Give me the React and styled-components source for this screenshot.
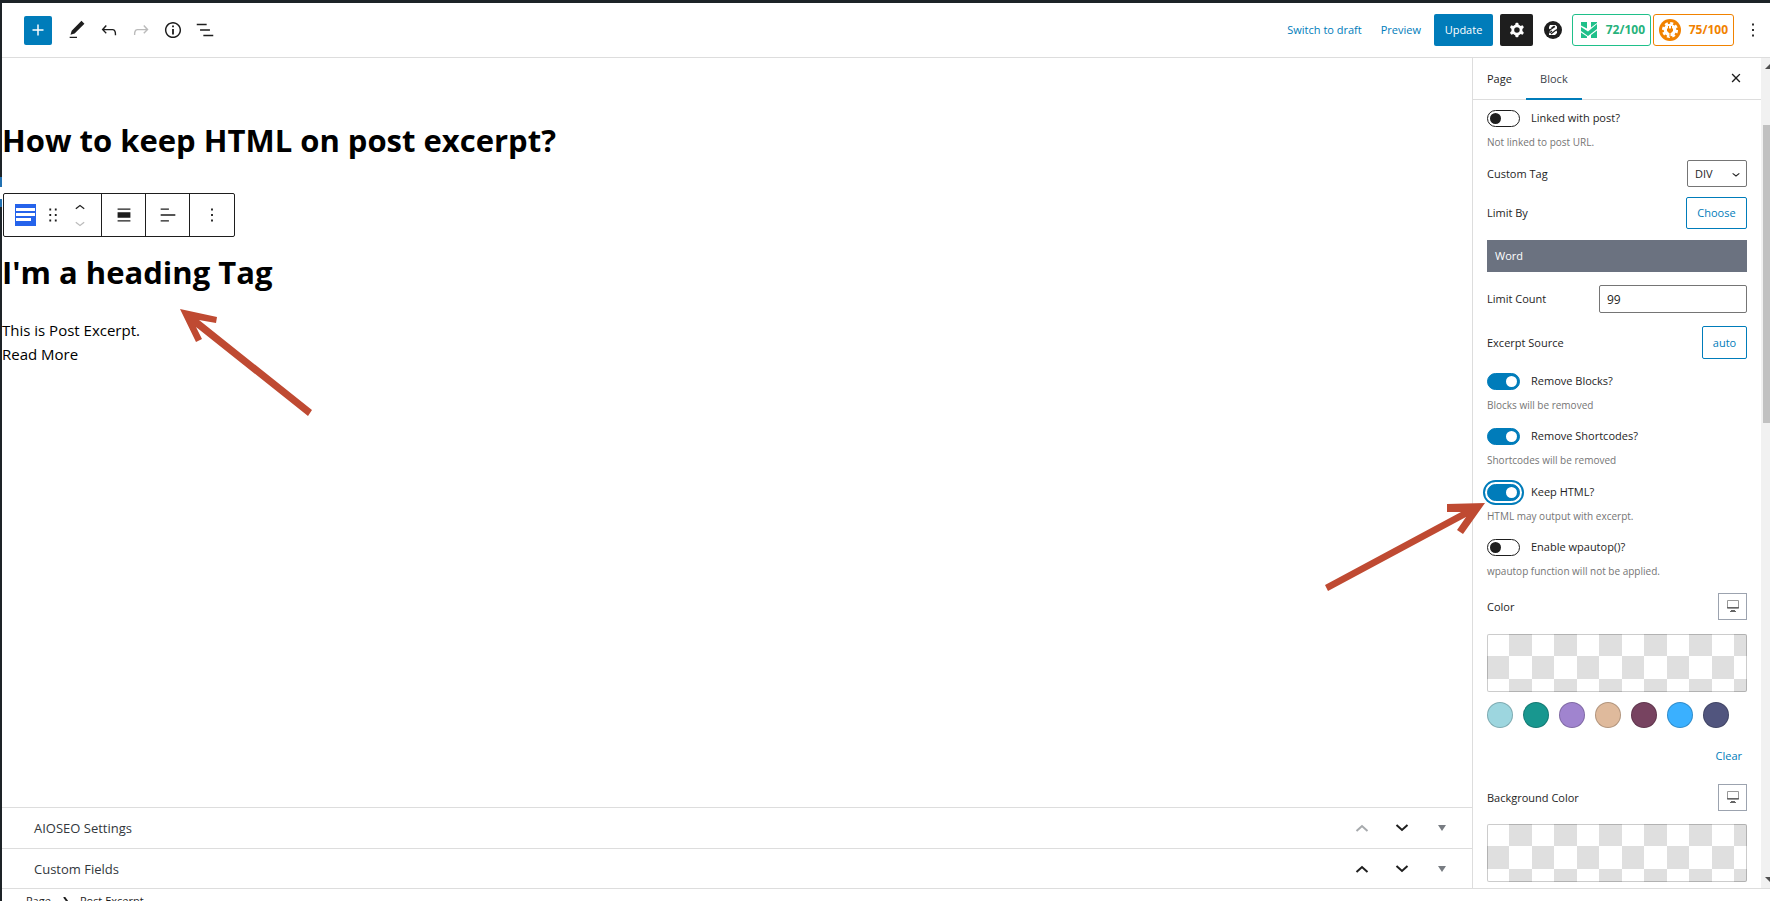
import React from "react";
import styled, { createGlobalStyle, css } from "styled-components";

const BLUE = "#007cba";
const INK = "#1e1e1e";
const LINE = "#dddddd";

const GlobalStyle = createGlobalStyle`
  *, *::before, *::after { box-sizing: border-box; }
  body {
    margin: 0;
    background: #fff;
    color: ${INK};
    font-family: "Open Sans", "Noto Sans", sans-serif;
    font-size: 11px;
    line-height: 16px;
  }
  button, input, select { font: inherit; color: inherit; margin: 0; }
  button { cursor: pointer; }
`;

/* ---------- Shell ---------- */
const Shell = styled.div`
  position: relative;
  display: flex;
  height: 100vh;
  overflow: hidden;
  border-top: 3px solid #1d2327;
`;
const MenuEdge = styled.div`
  flex: 0 0 2px;
  background: #1d2327;
  padding-top: 174px;
`;
const MenuCurrent = styled.div`
  height: 30px;
  background: linear-gradient(#2271b1 10px, #fff 10px 22px, #2271b1 22px);
`;
const Editor = styled.div`
  flex: 1;
  min-width: 0;
  display: flex;
  flex-direction: column;
`;
const Body = styled.div`
  flex: 1;
  min-height: 0;
  display: flex;
`;

/* ---------- Header ---------- */
const Header = styled.header`
  flex: 0 0 55px;
  display: flex;
  align-items: center;
  justify-content: space-between;
  padding: 0 0 0 22px;
  border-bottom: 1px solid ${LINE};
`;
const Tools = styled.div`
  display: flex;
  align-items: center;
`;
const IconButton = styled.button`
  display: flex;
  align-items: center;
  justify-content: center;
  width: ${(p) => p.$w || 32}px;
  height: ${(p) => p.$h || 32}px;
  padding: 0;
  border: 0;
  border-radius: 2px;
  background: ${(p) => p.$bg || "none"};
  color: ${(p) => p.$color || INK};
`;
const AddButton = styled(IconButton)`
  width: 28px;
  height: 29px;
  margin-right: 9px;
  background: ${BLUE};
  color: #fff;
`;
const Actions = styled.div`
  display: flex;
  align-items: center;
`;
const TextButton = styled.button`
  padding: 0;
  margin-right: ${(p) => p.$after || 0}px;
  border: 0;
  background: none;
  color: ${BLUE};
`;
const UpdateButton = styled.button`
  height: 32px;
  width: 59px;
  margin-right: 7px;
  padding: 0;
  border: 0;
  border-radius: 2px;
  background: ${BLUE};
  color: #fff;
`;
const ScoreButton = styled.button`
  display: flex;
  align-items: center;
  justify-content: space-between;
  width: ${(p) => p.$w}px;
  height: 32px;
  padding: 0 5px 0 ${(p) => p.$pad}px;
  margin-right: 2px;
  border: 1px solid ${(p) => p.$color};
  border-radius: 3px;
  background: #fff;
  color: ${(p) => p.$text};
  font-size: 12px;
  font-weight: 700;
`;

/* ---------- Canvas ---------- */
const Main = styled.main`
  flex: 1;
  min-width: 0;
  display: flex;
  flex-direction: column;
`;
const Canvas = styled.div`
  flex: 1;
  min-height: 0;
  color: #000;
  padding: 60px 0 0;
`;
const Title = styled.h1`
  margin: 0 0 30px;
  font-size: 31px;
  line-height: 45px;
  font-weight: 700;
`;
const ExcerptHeading = styled.h2`
  margin: 13px 0 23px;
  font-size: 31px;
  line-height: 45px;
  font-weight: 700;
`;
const Excerpt = styled.p`
  margin: 0;
  font-size: 15px;
  line-height: 24px;
`;
const BlockToolbar = styled.div`
  display: flex;
  width: fit-content;
  height: 44px;
  margin-left: 1px;
  border: 1px solid ${INK};
  border-radius: 2px;
`;
const ToolGroup = styled.div`
  display: flex;
  align-items: center;
  justify-content: center;
  min-width: 44px;
  padding: 0 ${(p) => p.$pad || 0}px;
  border-right: 1px solid ${INK};
  &:last-child { border-right: 0; }
`;
const Movers = styled.div`
  display: flex;
  flex-direction: column;
`;

/* ---------- Meta boxes ---------- */
const MetaBox = styled.section`
  display: flex;
  align-items: center;
  justify-content: space-between;
  height: ${(p) => p.$h}px;
  padding: 0 10px 0 32px;
  border-top: 1px solid ${LINE};
`;
const MetaTitle = styled.h2`
  margin: 0;
  font-size: 13px;
  line-height: 18px;
  font-weight: 400;
  color: #32373c;
`;
const MetaActions = styled.div`
  display: flex;
`;
const Footer = styled.footer`
  flex: 0 0 13px;
  overflow: hidden;
  border-top: 1px solid ${LINE};
`;
const Crumbs = styled.nav`
  display: flex;
  align-items: center;
  height: 24px;
  gap: 12px;
  padding-left: 24px;
`;

/* ---------- Sidebar ---------- */
const Sidebar = styled.aside`
  flex: 0 0 289px;
  display: flex;
  flex-direction: column;
  border-left: 1px solid ${LINE};
`;
const Tabs = styled.div`
  display: flex;
  flex: 0 0 42px;
  border-bottom: 1px solid ${LINE};
`;
const Tab = styled.button`
  padding: 0 14px;
  border: 0;
  background: none;
  ${(p) => p.$active && css`
    width: 56px;
    color: #3c434a;
    box-shadow: inset 0 -2px 0 ${BLUE};
    margin-bottom: -1px;
  `}
`;
const CloseButton = styled(IconButton)`
  margin: 4px 9px 0 auto;
`;
const Panel = styled.div`
  display: flex;
  flex-direction: column;
  padding: 8px 14px 0;
`;
const Row = styled.div`
  display: flex;
  align-items: center;
  justify-content: space-between;
  min-height: ${(p) => p.$h || 33}px;
  margin-bottom: ${(p) => p.$after || 0}px;
`;
const ToggleLabel = styled.label`
  display: flex;
  align-items: center;
  gap: 11px;
  height: 20px;
`;
const Switch = styled.input`
  appearance: none;
  display: flex;
  align-items: center;
  width: 33px;
  height: 17px;
  padding: 0 2px;
  border: 1px solid ${INK};
  border-radius: 9px;
  background: #fff;
  &::before {
    content: "";
    width: 11px;
    height: 11px;
    border-radius: 50%;
    background: ${INK};
  }
  &:checked {
    justify-content: flex-end;
    border-color: ${BLUE};
    background: ${BLUE};
  }
  &:checked::before { background: #fff; }
  ${(p) => p.$focused && css`
    box-shadow: 0 0 0 2px #fff, 0 0 0 4px ${BLUE};
  `}
`;
const Help = styled.p`
  margin: 6px 0 ${(p) => p.$after}px;
  font-size: 10px;
  line-height: 16px;
  color: #757575;
`;
const SelectWrap = styled.div`
  display: grid;
  align-items: center;
  justify-items: end;
  width: 60px;
  & > * { grid-area: 1 / 1; }
  & > svg { margin-right: 3px; pointer-events: none; }
`;
const Select = styled.select`
  appearance: none;
  width: 100%;
  height: 27px;
  padding: 0 7px;
  border: 1px solid #757575;
  border-radius: 2px;
  background: #fff;
`;
const OutlineButton = styled.button`
  width: ${(p) => p.$w}px;
  height: ${(p) => p.$h || 32}px;
  padding: 0;
  border: 1px solid ${BLUE};
  border-radius: 2px;
  background: #fff;
  color: ${BLUE};
`;
const Choice = styled.div`
  height: 32px;
  margin-bottom: 13px;
  padding: 0 8px;
  background: #6b7280;
  color: #fff;
  line-height: 32px;
`;
const TextField = styled.input`
  width: 148px;
  height: 28px;
  padding: 0 7px;
  border: 1px solid #757575;
  border-radius: 2px;
  font-size: 12px;
`;
const DeviceButton = styled(IconButton)`
  width: 29px;
  height: 27px;
  padding-bottom: 2px;
  border: 1px solid #9ca3af;
  border-radius: 0;
`;
const checks = "linear-gradient(45deg, #dfdfdf 25%, transparent 0, transparent 75%, #dfdfdf 0)";
const Checker = styled.button`
  height: 58px;
  padding: 0;
  border: 1px solid rgba(0, 0, 0, 0.2);
  border-radius: 2px;
  background: ${checks} 0 0 / 45px 45px border-box, ${checks} 22px 22px / 45px 45px border-box;
`;
const Swatches = styled.div`
  display: flex;
  gap: 10px;
  margin: 10px 0 20px;
`;
const Swatch = styled.button`
  width: 26px;
  height: 26px;
  padding: 0;
  border: 1px solid rgba(0, 0, 0, 0.2);
  border-radius: 50%;
  background: ${(p) => p.$color};
`;
const ClearButton = styled(TextButton)`
  align-self: flex-end;
  margin: 0 5px 20px 0;
`;

const ScrollTrack = styled.div`
  flex: 0 0 9px;
  overflow: hidden;
  display: flex;
  flex-direction: column;
  justify-content: space-between;
  background: #f1f1f1;
`;
const ScrollRange = styled.div`
  flex: 1;
  padding: 50px 0 0 2px;
`;
const ScrollThumb = styled.div`
  height: 40%;
  background: #c1c1c1;
`;

const Annotations = styled.svg`
  position: absolute;
  left: ${(p) => p.$left};
  right: ${(p) => p.$right};
  top: ${(p) => p.$top}px;
  pointer-events: none;
`;

/* ---------- Icons ---------- */
const paths = {
  plus: "M18 11.2h-5.2V6h-1.6v5.2H6v1.6h5.2V18h1.6v-5.2H18z",
  edit: "M20.1 5.1L16.9 2 6.2 12.7l-1.3 4.4 4.5-1.3L20.1 5.1zM4 20.8h8v-1.5H4v1.5z",
  undo: "M18.3 11.7c-.6-.6-1.4-.9-2.3-.9H6.7l2.9-3.3-1.1-1-4.5 5L8.5 16l1-1-2.7-2.7H16c.5 0 .9.2 1.3.5 1 1 1 3.4 1 4.5v.3h1.5v-.2c0-1.5 0-4.3-1.5-5.7z",
  redo: "M15.6 6.5l-1.1 1 2.9 3.3H8c-.9 0-1.7.3-2.3.9-1.4 1.5-1.4 4.2-1.4 5.6v.2h1.5v-.3c0-1.1 0-3.5 1-4.5.3-.3.7-.5 1.3-.5h9.2L14.5 15l1.1 1.1 4.6-4.6-4.6-5z",
  info: "M12 3.2c-4.8 0-8.8 3.9-8.8 8.8 0 4.8 3.9 8.8 8.8 8.8 4.8 0 8.8-3.9 8.8-8.8 0-4.8-4-8.8-8.8-8.8zm0 16c-4 0-7.2-3.3-7.2-7.2C4.8 8 8 4.8 12 4.8s7.2 3.3 7.2 7.2c0 4-3.2 7.2-7.2 7.2zM11 17h2v-6h-2v6zm0-8h2V7h-2v2z",
  list: "M13.8 5.2H3v1.5h10.8V5.2zm-3.6 12v1.5H21v-1.5H10.2zm7.2-6H6.6v1.5h10.8v-1.5z",
  more: "M13 19h-2v-2h2v2zm0-6h-2v-2h2v2zm0-6h-2V5h2v2z",
  cog: "M10.289 4.836A1 1 0 0111.275 4h1.306a1 1 0 01.987.836l.244 1.466c.787.26 1.503.679 2.108 1.218l1.393-.522a1 1 0 011.216.437l.653 1.13a1 1 0 01-.23 1.273l-1.148.944a6.025 6.025 0 010 2.435l1.149.946a1 1 0 01.23 1.272l-.653 1.13a1 1 0 01-1.216.437l-1.394-.522c-.605.54-1.32.958-2.108 1.218l-.244 1.466a1 1 0 01-.987.836h-1.306a1 1 0 01-.986-.836l-.244-1.466a5.995 5.995 0 01-2.108-1.218l-1.394.522a1 1 0 01-1.217-.436l-.653-1.131a1 1 0 01.23-1.272l1.149-.946a6.026 6.026 0 010-2.435l-1.148-.944a1 1 0 01-.23-1.272l.653-1.131a1 1 0 011.217-.437l1.393.522a5.994 5.994 0 012.108-1.218l.244-1.466zM14.929 12a3 3 0 11-6 0 3 3 0 016 0z",
  close: "M12 13.06l3.712 3.713 1.061-1.06L13.061 12l3.712-3.712-1.06-1.06L12 10.938 8.288 7.227l-1.061 1.06L10.939 12l-3.712 3.712 1.06 1.061L12 13.061z",
  down: "M17.5 11.6L12 16l-5.5-4.4.9-1.2L12 14l4.5-3.6 1 1.2z",
  up: "M6.5 12.4L12 8l5.5 4.4-.9 1.2L12 10l-4.5 3.6-1-1.2z",
  align: "M5 4.8h14v1.5H5zM5 9h14v6H5zM5 17.7h14v1.5H5z",
  textAlign: "M4 4.8h9v1.5H4zM4 11.2h16v1.5H4zM4 17.7h9v1.5H4z",
  drag: "M8 7h2V5H8v2zm0 6h2v-2H8v2zm0 6h2v-2H8v2zm6-14v2h2V5h-2zm0 8h2v-2h-2v2zm0 6h2v-2h-2v2z",
};
const Icon = ({ name, size = 22 }) => (
  <svg width={size} height={size} viewBox="0 0 24 24" fill="currentColor" fillRule="evenodd" aria-hidden="true">
    <path d={paths[name]} />
  </svg>
);
const ZIcon = () => (
  <svg width="18" height="18" viewBox="0 0 18 18" aria-hidden="true">
    <circle cx="9" cy="9" r="9" fill={INK} />
    <path d="M6 4h5.500l1.500 1.500v2L11.800 9l1.200 1.500V12l-2 2H5v-2l1.500-3L5 7.500V6z" fill="#fff" />
    <path d="M5 9.500L11 5.500M7 13l5-4M7.500 7l3-2M5.500 12l2.500-2" stroke={INK} strokeWidth="1.200" />
  </svg>
);
const MIcon = () => (
  <svg width="16" height="16" viewBox="0 0 16 16" fill="#1fc08a" aria-hidden="true">
    <path d="M0 0h6v6.500L0 3.500zM0 5l7 4.500L16 2v5l-9 7-7-5zM0 10.500l6 4V16H0zM16 8.500V16h-6v-3zM10 0h6v1l-6 4.500z" />
  </svg>
);
const GearBadge = () => (
  <svg width="22" height="22" viewBox="0 0 22 22" aria-hidden="true">
    <circle cx="11" cy="11" r="11" fill="#f18200" />
    <circle cx="11" cy="11" r="6.300" fill="#fff" />
    <circle cx="11" cy="11" r="6.800" fill="none" stroke="#fff" strokeWidth="2.500" strokeDasharray="3 2.340" />
    <path d="M8 9.500h6v2.500l-2 2h-2l-2-2zM9 7h1v3H9zM12 7h1v3h-1zM10.500 13h1v5h-1z" fill="#f18200" />
  </svg>
);
const MonitorIcon = () => (
  <svg width="14" height="14" viewBox="0 0 14 14" fill="none" stroke="#999" aria-hidden="true">
    <path d="M1.500 1.500h11v8h-11z" />
    <path d="M1 8.500h12M4 12.500h6M5 11.500h4" stroke="#666" />
  </svg>
);
const ExcerptIcon = () => (
  <svg width="21" height="22" viewBox="0 0 21 22" aria-hidden="true">
    <path fill="#2563eb" d="M0 0h21v22H0z" />
    <path fill="#fff" d="M1 4h19v3H1zM1 9h19v3H1zM1 14h15v3H1z" />
  </svg>
);
const Triangle = ({ up }) => (
  <svg width="17" height="17" viewBox="0 0 17 17" fill="#505050" aria-hidden="true">
    <path d={up ? "M4 11l5-5 5 5z" : "M4 6l5 5 5-5z"} />
  </svg>
);

const ToggleSetting = ({ label, help, checked, focused, after = 13 }) => (
  <>
    <ToggleLabel>
      <Switch type="checkbox" defaultChecked={checked} $focused={focused} />
      {label}
    </ToggleLabel>
    <Help $after={after}>{help}</Help>
  </>
);

const swatchColors = [
  ["Aqua", "#9dd6df"], ["Teal", "#18978f"], ["Purple", "#a084cf"], ["Tan", "#dfba9c"],
  ["Plum", "#774360"], ["Sky", "#3ab0ff"], ["Indigo", "#51557e"],
];

const Meta = ({ title, height, first }) => (
  <MetaBox $h={height}>
    <MetaTitle>{title}</MetaTitle>
    <MetaActions>
      <IconButton $w={40} aria-label="Move up" disabled={first} $color={first ? "#a7aaad" : INK}>
        <svg width="14" height="8" viewBox="0 0 14 8" fill="none" stroke="currentColor" strokeWidth="2"><path d="M1.500 7L7 2l5.500 5" /></svg>
      </IconButton>
      <IconButton $w={40} aria-label="Move down">
        <svg width="14" height="8" viewBox="0 0 14 8" fill="none" stroke="currentColor" strokeWidth="2"><path d="M1.500 1L7 6l5.500-5" /></svg>
      </IconButton>
      <IconButton $w={40} aria-label="Toggle panel" $color="#787c82">
        <svg width="8" height="6" viewBox="0 0 8 6" fill="currentColor"><path d="M0 0h8L4 6z" /></svg>
      </IconButton>
    </MetaActions>
  </MetaBox>
);

export default function App() {
  return (
    <Shell>
      <GlobalStyle />
      <MenuEdge><MenuCurrent /></MenuEdge>
      <Editor>
        <Header>
          <Tools>
            <AddButton aria-label="Add block"><Icon name="plus" /></AddButton>
            <IconButton aria-label="Edit"><Icon name="edit" /></IconButton>
            <IconButton aria-label="Undo"><Icon name="undo" /></IconButton>
            <IconButton aria-label="Redo" disabled $color="#bbb"><Icon name="redo" /></IconButton>
            <IconButton aria-label="Details"><Icon name="info" /></IconButton>
            <IconButton aria-label="List view"><Icon name="list" /></IconButton>
          </Tools>
          <Actions>
            <TextButton $after={19}>Switch to draft</TextButton>
            <TextButton $after={13}>Preview</TextButton>
            <UpdateButton>Update</UpdateButton>
            <IconButton $w={33} $bg={INK} $color="#fff" aria-label="Settings"><Icon name="cog" /></IconButton>
            <IconButton $w={39} aria-label="Styles"><ZIcon /></IconButton>
            <ScoreButton $w={79} $pad={8} $color="#1fc08a" $text="#27b27c"><MIcon />72/100</ScoreButton>
            <ScoreButton $w={81} $pad={5} $color="#f18200" $text="#f18200"><GearBadge />75/100</ScoreButton>
            <IconButton $w={34} aria-label="Options"><Icon name="more" /></IconButton>
          </Actions>
        </Header>
        <Body>
          <Main>
            <Canvas>
              <Title>How to keep HTML on post excerpt?</Title>
              <BlockToolbar role="toolbar" aria-label="Block tools">
                <ToolGroup $pad={11}>
                  <IconButton $w={21} aria-label="Post Excerpt"><ExcerptIcon /></IconButton>
                  <IconButton $w={33} aria-label="Drag"><Icon name="drag" /></IconButton>
                  <Movers>
                    <IconButton $w={21} $h={15} aria-label="Move up"><Icon name="up" size={20} /></IconButton>
                    <IconButton $w={21} $h={15} $color="#bbb" disabled aria-label="Move down"><Icon name="down" size={20} /></IconButton>
                  </Movers>
                </ToolGroup>
                <ToolGroup><IconButton aria-label="Align"><Icon name="align" /></IconButton></ToolGroup>
                <ToolGroup><IconButton aria-label="Align text"><Icon name="textAlign" /></IconButton></ToolGroup>
                <ToolGroup><IconButton aria-label="More"><Icon name="more" /></IconButton></ToolGroup>
              </BlockToolbar>
              <ExcerptHeading>I'm a heading Tag</ExcerptHeading>
              <Excerpt>This is Post Excerpt.</Excerpt>
              <Excerpt>Read More</Excerpt>
            </Canvas>
            <Meta title="AIOSEO Settings" height={41} first />
            <Meta title="Custom Fields" height={40} />
          </Main>
          <Sidebar>
            <Tabs>
              <Tab>Page</Tab>
              <Tab $active>Block</Tab>
              <CloseButton aria-label="Close settings"><Icon name="close" /></CloseButton>
            </Tabs>
            <Panel>
              <ToggleSetting label="Linked with post?" help="Not linked to post URL." after={7} />
              <Row $after={6}>
                <label htmlFor="tag">Custom Tag</label>
                <SelectWrap>
                  <Select id="tag" defaultValue="DIV"><option>DIV</option></Select>
                  <Icon name="down" size={16} />
                </SelectWrap>
              </Row>
              <Row $after={11}>
                <span>Limit By</span>
                <OutlineButton $w={61}>Choose</OutlineButton>
              </Row>
              <Choice>Word</Choice>
              <Row $h={28} $after={13}>
                <label htmlFor="count">Limit Count</label>
                <TextField id="count" defaultValue="99" />
              </Row>
              <Row $after={12}>
                <span>Excerpt Source</span>
                <OutlineButton $w={45} $h={33}>auto</OutlineButton>
              </Row>
              <ToggleSetting label="Remove Blocks?" help="Blocks will be removed" checked />
              <ToggleSetting label="Remove Shortcodes?" help="Shortcodes will be removed" checked after={14} />
              <ToggleSetting label="Keep HTML?" help="HTML may output with excerpt." checked focused />
              <ToggleSetting label="Enable wpautop()?" help="wpautop function will not be applied." after={14} />
              <Row $h={27} $after={14}>
                <span>Color</span>
                <DeviceButton aria-label="Device"><MonitorIcon /></DeviceButton>
              </Row>
              <Checker aria-label="Color" />
              <Swatches>
                {swatchColors.map(([name, color]) => <Swatch key={name} aria-label={name} $color={color} />)}
              </Swatches>
              <ClearButton>Clear</ClearButton>
              <Row $h={27} $after={13}>
                <span>Background Color</span>
                <DeviceButton aria-label="Device"><MonitorIcon /></DeviceButton>
              </Row>
              <Checker aria-label="Background color" />
            </Panel>
          </Sidebar>
          <ScrollTrack>
            <Triangle up />
            <ScrollRange><ScrollThumb /></ScrollRange>
            <Triangle />
          </ScrollTrack>
        </Body>
        <Footer>
          <Crumbs aria-label="Breadcrumb">
            <span>Page</span>
            <svg width="5" height="8" viewBox="0 0 5 8" fill="none" stroke={INK} strokeWidth="2"><path d="M1 0l3 4-3 4" /></svg>
            <span>Post Excerpt</span>
          </Crumbs>
        </Footer>
      </Editor>
      <Annotations $left="180px" $right="auto" $top={306} width="132" height="110" viewBox="0 0 132 110" fill="#bf4a32">
        <path d="M0 0L37 8l-1 6-17-3 113 90-4 6L16 18l6 12-6 3z" />
      </Annotations>
      <Annotations $left="auto" $right="285px" $top={499} width="161" height="90" viewBox="0 0 161 90" fill="#bf4a32">
        <path d="M161 1L139 32l-6-4 9-13L4 89l-3-6L137 10l-14 0V2z" />
      </Annotations>
    </Shell>
  );
}
